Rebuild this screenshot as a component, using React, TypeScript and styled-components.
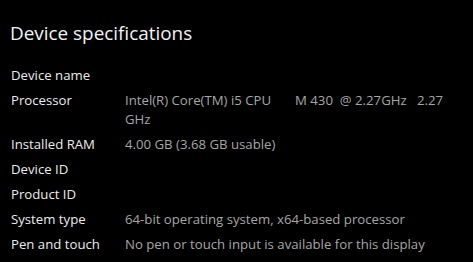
import React from "react";
import styled, { createGlobalStyle } from "styled-components";

const GlobalStyle = createGlobalStyle`
  html, body {
    margin: 0;
    padding: 0;
    background: #000;
  }
  body {
    font-family: "Open Sans", "Noto Sans", sans-serif;
    -webkit-font-smoothing: antialiased;
  }
`;

interface Spec {
  label: string;
  value: string;
}

const specs: Spec[] = [
  { label: "Device name", value: "" },
  {
    label: "Processor",
    value: "Intel(R) Core(TM) i5 CPU       M 430  @ 2.27GHz   2.27 GHz",
  },
  { label: "Installed RAM", value: "4.00 GB (3.68 GB usable)" },
  { label: "Device ID", value: "" },
  { label: "Product ID", value: "" },
  { label: "System type", value: "64-bit operating system, x64-based processor" },
  { label: "Pen and touch", value: "No pen or touch input is available for this display" },
];

export default function App() {
  return (
    <>
      <GlobalStyle />
      <Panel>
        <Title>Device specifications</Title>
        <SpecList>
          {specs.map((s) => (
            <SpecRow key={s.label}>
              <Label>{s.label}</Label>
              <Value>{s.value}</Value>
            </SpecRow>
          ))}
        </SpecList>
      </Panel>
    </>
  );
}

const Panel = styled.div`
  width: 473px;
  height: 262px;
  box-sizing: border-box;
  padding: 19px 0 0 10px;
  background: #000;
  overflow: hidden;
`;

const Title = styled.h2`
  margin: 0 0 19px;
  font-size: 18.9px;
  font-weight: 400;
  line-height: 28px;
  color: #f2f2f2;
`;

const SpecList = styled.div`
  display: flex;
  flex-direction: column;
  gap: 6px;
`;

const SpecRow = styled.div`
  display: grid;
  grid-template-columns: 115px 330px;
  font-size: 13.2px;
  line-height: 19px;
`;

const Label = styled.span`
  padding-left: 1px;
  color: #ececec;
`;

const Value = styled.span`
  color: #a6a6a6;
  white-space: pre-wrap;
  min-height: 19px;
`;
